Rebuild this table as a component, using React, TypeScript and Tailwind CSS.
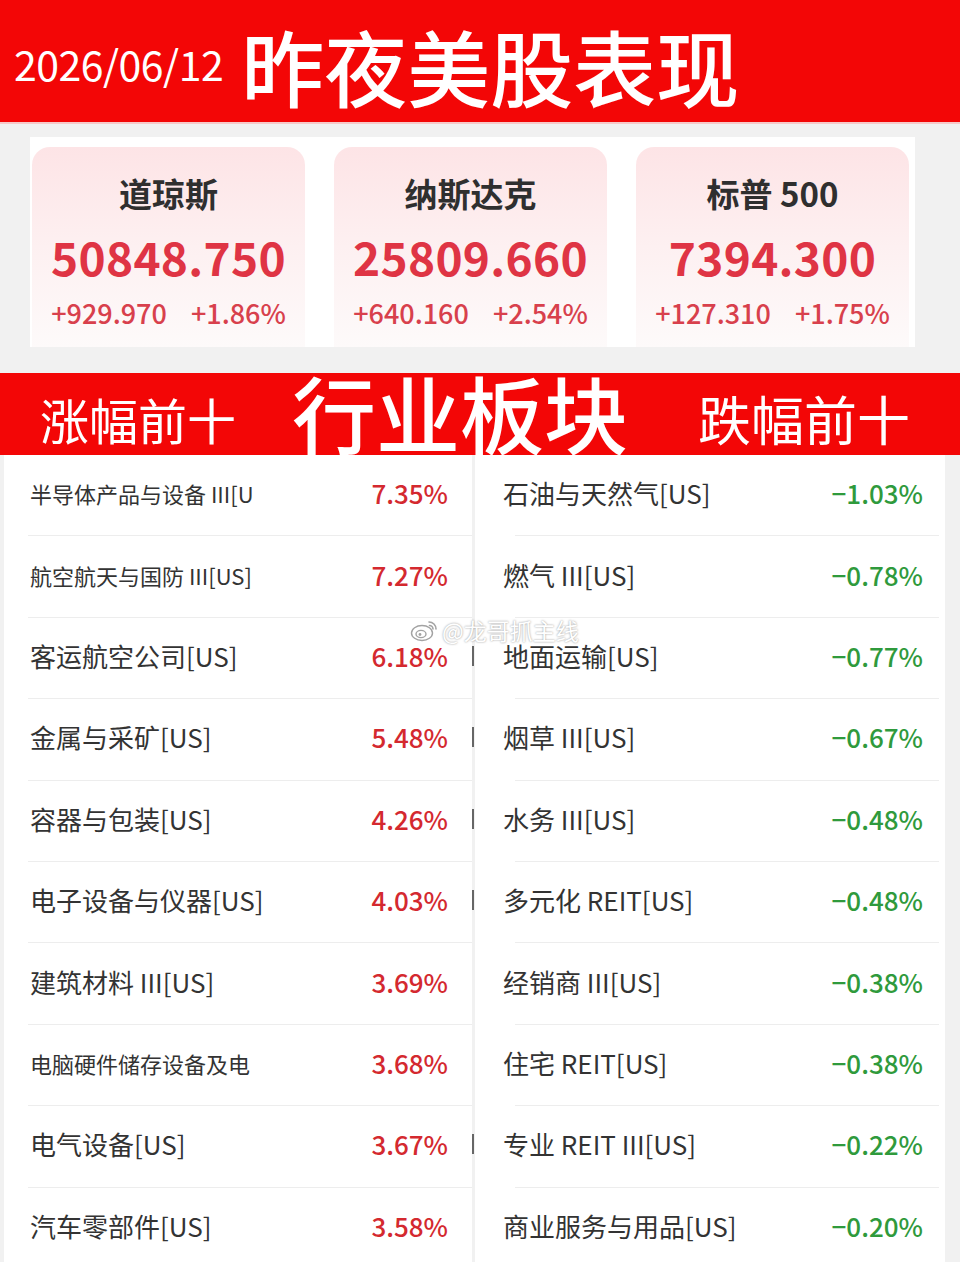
import React from "react";

const FONT = '"Noto Sans CJK SC", "Noto Sans", sans-serif';

const indices = [
  { name: "道琼斯", value: "50848.750", diff: "+929.970", pct: "+1.86%" },
  { name: "纳斯达克", value: "25809.660", diff: "+640.160", pct: "+2.54%" },
  { name: "标普 500", value: "7394.300", diff: "+127.310", pct: "+1.75%" },
];

const gainers = [
  { name: "半导体产品与设备 III[U", pct: "7.35%", size: "text-[22px]", edge: false },
  { name: "航空航天与国防 III[US]", pct: "7.27%", size: "text-[22px]", edge: false },
  { name: "客运航空公司[US]", pct: "6.18%", size: "text-[26px]", edge: true },
  { name: "金属与采矿[US]", pct: "5.48%", size: "text-[26px]", edge: true },
  { name: "容器与包装[US]", pct: "4.26%", size: "text-[26px]", edge: true },
  { name: "电子设备与仪器[US]", pct: "4.03%", size: "text-[26px]", edge: true },
  { name: "建筑材料 III[US]", pct: "3.69%", size: "text-[26px]", edge: false },
  { name: "电脑硬件储存设备及电", pct: "3.68%", size: "text-[22px]", edge: false },
  { name: "电气设备[US]", pct: "3.67%", size: "text-[26px]", edge: true },
  { name: "汽车零部件[US]", pct: "3.58%", size: "text-[26px]", edge: false },
];

const losers = [
  { name: "石油与天然气[US]", pct: "-1.03%" },
  { name: "燃气 III[US]", pct: "-0.78%" },
  { name: "地面运输[US]", pct: "-0.77%" },
  { name: "烟草 III[US]", pct: "-0.67%" },
  { name: "水务 III[US]", pct: "-0.48%" },
  { name: "多元化 REIT[US]", pct: "-0.48%" },
  { name: "经销商 III[US]", pct: "-0.38%" },
  { name: "住宅 REIT[US]", pct: "-0.38%" },
  { name: "专业 REIT III[US]", pct: "-0.22%" },
  { name: "商业服务与用品[US]", pct: "-0.20%" },
];

const WeiboLogo = () => (
  <svg width="30" height="24" viewBox="0 0 30 24" fill="none">
    <ellipse cx="12" cy="15" rx="10.5" ry="7.5" fill="#fff" stroke="#9a9a9a" strokeWidth="1.4" />
    <ellipse cx="11" cy="16" rx="5" ry="3.6" fill="none" stroke="#9a9a9a" strokeWidth="1.4" />
    <circle cx="10" cy="16.5" r="1.4" fill="#9a9a9a" />
    <path d="M19 4 A7 7 0 0 1 26 11" stroke="#9a9a9a" strokeWidth="1.6" fill="none" strokeLinecap="round" />
    <path d="M19.5 7.5 A3.5 3.5 0 0 1 23 11" stroke="#9a9a9a" strokeWidth="1.6" fill="none" strokeLinecap="round" />
  </svg>
);

const App = () => {
  return (
    <div className="relative h-[1262px] w-[960px] overflow-hidden bg-[#f1f1f1]" style={{ fontFamily: FONT }}>
      {/* top banner */}
      <header className="flex h-[124px] items-center border-b-2 border-[#f7c9c9] bg-[#f30606]">
        <span className="ml-[14px] mt-[4px] text-[41px] font-normal leading-none tracking-[-0.5px] text-white">2026/06/12</span>
        <h1 className="ml-[18px] mt-[8px] text-[83px] font-medium leading-none text-white">昨夜美股表现</h1>
      </header>

      {/* index cards */}
      <section className="h-[249px] pt-[13px]">
        <div className="ml-[30px] grid h-[210px] w-[885px] grid-cols-3 gap-[29px] bg-white pt-[10px] pl-[2px] pr-[6px]">
          {indices.map(({ name, value, diff, pct }) => (
            <div
              key={name}
              className="flex flex-col items-center rounded-t-[18px] bg-gradient-to-b from-[#fde4e6] via-[#fdf0f1] to-[#fdfafa] pt-[30px]"
            >
              <div className="text-[33px] font-semibold leading-none text-[#2f2f2f]">{name}</div>
              <div className="mt-[23px] text-[46px] font-semibold leading-none tracking-[0.3px] text-[#df3444]">{value}</div>
              <div className="mt-[20px] flex gap-[24px] text-[27px] font-medium leading-none text-[#d8404c]">
                <span>{diff}</span>
                <span>{pct}</span>
              </div>
            </div>
          ))}
        </div>
      </section>

      {/* sector band */}
      <div className="flex h-[82px] items-center bg-[#f30606] text-white">
        <span className="ml-[40px] mt-[8px] text-[49px] font-normal leading-none">涨幅前十</span>
        <span className="ml-[56px] mt-[-4px] text-[84px] font-medium leading-none">行业板块</span>
        <span className="ml-[70px] mt-[8px] text-[53px] font-normal leading-none">跌幅前十</span>
      </div>

      {/* lists */}
      <div className="flex">
        <ul className="ml-[4px] w-[468px] bg-white">
          {gainers.map(({ name, pct, size, edge }, i) => (
            <li key={name} className="relative flex h-[81.4px] items-center pb-[5px] pl-[26px]">
              <span className={`${size} flex-1 leading-none text-[#333]`}>{name}</span>
              <span className="mr-[24px] text-[26px] font-medium leading-none text-[#d4292f]">{pct}</span>
              {edge && <span className="absolute right-[-2px] top-[28px] h-[20px] w-[2px] bg-[#666]" />}
              {i < gainers.length - 1 && <span className="absolute bottom-0 left-[24px] right-0 h-px bg-[#ededed]" />}
            </li>
          ))}
        </ul>
        <ul className="ml-[3px] w-[470px] bg-white">
          {losers.map(({ name, pct }, i) => (
            <li key={name} className="relative flex h-[81.4px] items-center pb-[5px] pl-[28px]">
              <span className="flex-1 text-[26px] leading-none text-[#333]">{name}</span>
              <span className="mr-[22px] text-[26px] font-medium leading-none text-[#2f9a3c]">
                {pct.replace("-", "−")}
              </span>
              {i < losers.length - 1 && <span className="absolute bottom-0 left-[40px] right-[6px] h-px bg-[#ededed]" />}
            </li>
          ))}
        </ul>
      </div>

      {/* watermark */}
      <div className="absolute left-[410px] top-[618px] flex items-center gap-[2px] opacity-90">
        <WeiboLogo />
        <span className="text-[23px] leading-none text-white [text-shadow:0_0_2px_rgba(0,0,0,0.5)]">@龙哥抓主线</span>
      </div>
    </div>
  );
};

export default App;
